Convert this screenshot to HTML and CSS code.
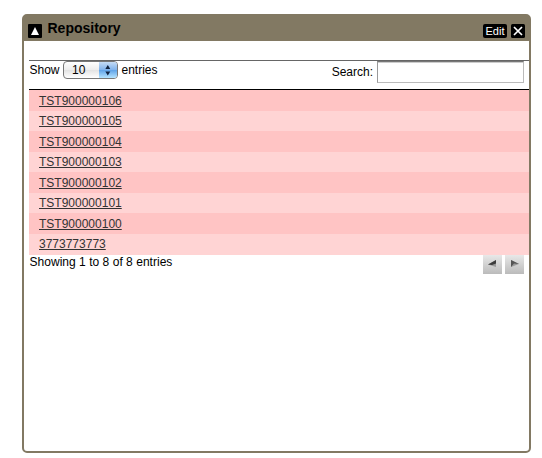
FILE: index.html
```html
<!DOCTYPE html>
<html lang="en">
<head>
<meta charset="utf-8">
<title>Repository</title>
<link rel="stylesheet" href="styles.css">
</head>
<body>
<section class="panel">
  <header class="panel-header">
    <svg class="collapse" width="14" height="14" viewBox="0 0 14 14"><rect width="14" height="14" rx="1" fill="#000"/><path d="M7 3L11 11H3Z" fill="#fff"/></svg>
    <h1>Repository</h1>
    <span class="edit">Edit</span>
    <svg class="close" width="14" height="14" viewBox="0 0 14 14"><rect width="14" height="14" rx="1.5" fill="#000"/><path d="M3 3L11 11M11 3L3 11" stroke="#fff" stroke-width="1.7"/></svg>
  </header>
  <div class="content">
    <div class="toolbar">
      <span class="show">Show</span>
      <div class="select"><span>10</span><svg width="18" height="16" viewBox="0 0 18 16"><path d="M9 3L11.500 7H6.500ZM9 13.500L11.500 9.500H6.500Z" fill="#10233f"/></svg></div>
      <span class="entries">entries</span>
      <label class="search" for="q">Search:</label>
      <input id="q" class="field" type="text">
    </div>
    <ul class="rows">
      <li><a>TST900000106</a></li>
      <li><a>TST900000105</a></li>
      <li><a>TST900000104</a></li>
      <li><a>TST900000103</a></li>
      <li><a>TST900000102</a></li>
      <li><a>TST900000101</a></li>
      <li><a>TST900000100</a></li>
      <li><a>3773773773</a></li>
    </ul>
    <footer class="footer">
      <span class="info">Showing 1 to 8 of 8 entries</span>
      <span class="page"><svg width="19" height="19" viewBox="0 0 19 19"><path d="M5 9.500L13 5V12Z" fill="#999"/><path d="M5 9.500L13 5V8.500L9 10Z" fill="#3c3c3c"/></svg></span>
      <span class="page"><svg width="19" height="19" viewBox="0 0 19 19"><path d="M6 5L14 9L6 12Z" fill="#999"/><path d="M6 5L14 9L9 8.500L6 12Z" fill="#555"/></svg></span>
    </footer>
  </div>
</section>
</body>
</html>
```
FILE: styles.css
```css
* { box-sizing: border-box; }
body {
  margin: 0;
  padding: 14px 11px 0 22px;
  background: #fff;
  color: #000;
  font: 12px/14px "Liberation Sans", Arial, sans-serif;
}
.panel {
  width: 509px;
  height: 439px;
  border: 2px solid #827963;
  border-radius: 5px;
  background: #fff;
}
.panel-header {
  display: flex;
  height: 25px;
  padding: 0 4px;
  background: #827963;
}
.collapse { margin-top: 8px; }
h1 { margin: 4px auto 0 5.5px; font-size: 14px; line-height: 16px; }
.edit {
  width: 24px;
  height: 14px;
  margin: 8px 4px 0 0;
  border-radius: 2px;
  background: #000;
  color: #fff;
  font-size: 11px;
  line-height: 14px;
  text-align: center;
}
.close { margin-top: 8px; }
.content { margin: 19px 0 0 5px; }
.toolbar {
  display: flex;
  height: 29px;
  padding-right: 5px;
  border-top: 1px solid #666;
}
.show { width: 34px; padding-left: 0.5px; margin-top: 2px; }
.select {
  display: flex;
  width: 55px;
  height: 18px;
  border: 1px solid #777;
  border-radius: 4px;
  background: linear-gradient(#fff, #eee 48%, #e2e2e2 50%, #fff);
  overflow: hidden;
}
.select span { width: 36px; padding-left: 8px; line-height: 16px; }
.select svg { background: linear-gradient(#c5dcf5, #81b3ec 48%, #5ea2e8 50%, #b5e4ff); }
.entries { margin: 2px auto 0 3.5px; }
.search { margin: 4px 4px 0 0; }
.field {
  width: 147px;
  height: 22px;
  padding: 0 3px;
  border: 1px solid #bbb;
  border-top: 1px solid #777;
  border-left-color: #999;
  background: #fff;
  box-shadow: inset 0 1px #ccc;
  font: inherit;
}
.rows {
  margin: 0;
  padding: 0;
  border-top: 1px solid #000;
  list-style: none;
}
.rows li {
  height: 20px;
  padding: 3px 10px 0;
  background: #ffd4d4;
  color: #333;
}
.rows li:nth-child(odd) { height: 21px; padding-top: 4px; background: #ffc4c4; }
.rows li:last-child { height: 21px; }
.rows a {
  text-decoration: underline;
  text-decoration-thickness: 1px;
  text-underline-offset: 1px;
}
.footer { display: flex; padding-right: 5px; }
.info { margin-right: auto; padding-left: 0.5px; letter-spacing: 0.03px; }
.page {
  width: 19px;
  height: 19px;
  margin-left: 3px;
  background: linear-gradient(#e8e8e8, #bbb);
}
.page svg { display: block; }
```
